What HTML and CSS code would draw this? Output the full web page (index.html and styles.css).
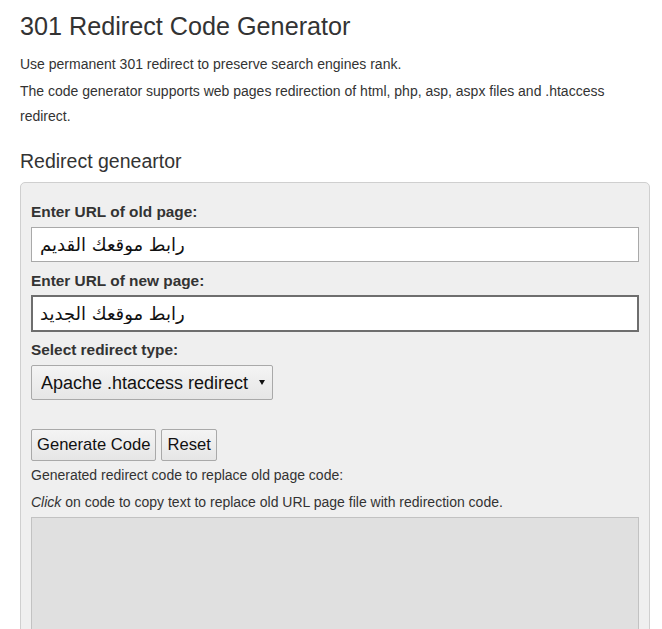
FILE: index.html
```html
<!DOCTYPE html>
<html>
<head>
<meta charset="utf-8">
<title>301 Redirect Code Generator</title>
<link rel="stylesheet" href="styles.css">
</head>
<body>
<div class="page">
  <h1 class="title">301 Redirect Code Generator</h1>
  <p class="intro">Use permanent 301 redirect to preserve search engines rank.</p>
  <p class="intro">The code generator supports web pages redirection of html, php, asp, aspx files and .htaccess redirect.</p>
  <h2 class="subtitle">Redirect geneartor</h2>
  <div class="panel">
    <label class="field-label" for="old">Enter URL of old page:</label>
    <input class="text-input" id="old" type="text" value="رابط موقعك القديم">
    <label class="field-label" for="new">Enter URL of new page:</label>
    <input class="text-input focused" id="new" type="text" value="رابط موقعك الجديد">
    <label class="field-label" for="type">Select redirect type:</label>
    <div class="select-wrap">
      <select class="select" id="type">
        <option>Apache .htaccess redirect</option>
      </select>
    </div>
    <div class="buttons">
      <button class="btn" type="button">Generate Code</button>
      <button class="btn" type="button">Reset</button>
    </div>
    <p class="note">Generated redirect code to replace old page code:</p>
    <p class="note"><em>Click</em> on code to copy text to replace old URL page file with redirection code.</p>
    <textarea class="output" readonly></textarea>
  </div>
</div>
</body>
</html>
```
FILE: styles.css
```css
html, body {
  margin: 0;
  padding: 0;
  background: #fff;
}
body {
  font-family: "Liberation Sans", Arial, sans-serif;
  color: #333;
  font-size: 14px;
}
.page {
  width: 630px;
  padding: 0 0 0 20px;
}
.title {
  font-size: 25.2px;
  font-weight: normal;
  line-height: 30px;
  margin: 11px 0 11px 0;
}
.intro {
  margin: 0 0 2px 0;
  line-height: 25px;
}
.subtitle {
  font-size: 19.5px;
  font-weight: normal;
  line-height: 24px;
  margin: 20px 0 9px 0;
}
.panel {
  background: #efefef;
  border: 1px solid #cfcfcf;
  border-radius: 5px;
  padding: 19px 10px 0 10px;
  display: flex;
  flex-direction: column;
  height: 460px;
  box-sizing: border-box;
}
.field-label {
  font-weight: bold;
  font-size: 15.4px;
  line-height: 20px;
  display: block;
  margin-bottom: 5px;
}
.text-input {
  display: block;
  box-sizing: border-box;
  width: 100%;
  height: 35px;
  border: 1px solid #a9a9a9;
  background: #fff;
  font-family: "DejaVu Sans", "Noto Sans", sans-serif;
  font-size: 18px;
  color: #111;
  padding: 0 8px;
  margin: 0 0 9px 0;
  outline: none;
}
.text-input.focused {
  border: 2px solid #6e6e6e;
  height: 37px;
  padding: 0 7px;
  margin-top: -1px;
  margin-bottom: 8px;
}
.select-wrap {
  position: relative;
  width: 242px;
}
.select-wrap::after {
  content: "";
  position: absolute;
  right: 8px;
  top: 15px;
  border-left: 3px solid transparent;
  border-right: 3px solid transparent;
  border-top: 5px solid #111;
  pointer-events: none;
}
.select {
  appearance: none;
  -webkit-appearance: none;
  display: block;
  box-sizing: border-box;
  width: 242px;
  height: 35px;
  border: 1px solid #a9a9a9;
  border-radius: 2px;
  background: linear-gradient(#f4f4f4, #e6e6e6);
  font-family: "Liberation Sans", Arial, sans-serif;
  font-size: 18px;
  color: #111;
  padding: 0 20px 0 9px;
}
.buttons {
  display: flex;
  gap: 5px;
  margin-top: 29px;
}
.btn {
  box-sizing: border-box;
  height: 32px;
  border: 1px solid #a9a9a9;
  border-radius: 2px;
  background: linear-gradient(#f4f4f4, #e6e6e6);
  font-family: "Liberation Sans", Arial, sans-serif;
  font-size: 16.6px;
  color: #111;
  padding: 0 5px;
}
.note {
  margin: 4px 0 2px 0;
  line-height: 20px;
}
.note + .note {
  margin-top: 5px;
}
.output {
  box-sizing: border-box;
  width: 100%;
  flex: 1;
  margin-top: 3px;
  border: 1px solid #c2c2c2;
  background: #e0e0e0;
  resize: none;
}
```
